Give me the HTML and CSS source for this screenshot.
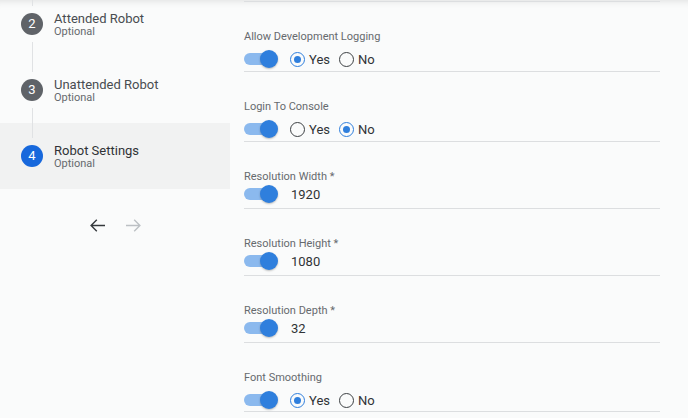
FILE: index.html
```html
<!DOCTYPE html>
<html lang="en">
<head>
    <meta charset="UTF-8">
    <meta name="viewport" content="width=device-width, initial-scale=1.0">
    <link rel="stylesheet" href="styles.css">
    <title>Robot Settings</title>
</head>
<body>
    <div class="page">
        <div class="sidebar">
            <div class="steps">
                <div class="step">
                    <div class="rail"><span class="line"></span><span class="dot">2</span><span class="line"></span></div>
                    <div class="step-text"><div class="step-title">Attended Robot</div><div class="step-sub">Optional</div></div>
                </div>
                <div class="step">
                    <div class="rail"><span class="line"></span><span class="dot">3</span><span class="line"></span></div>
                    <div class="step-text"><div class="step-title">Unattended Robot</div><div class="step-sub">Optional</div></div>
                </div>
                <div class="step active">
                    <div class="rail"><span class="line"></span><span class="dot">4</span><span class="line none"></span></div>
                    <div class="step-text"><div class="step-title">Robot Settings</div><div class="step-sub">Optional</div></div>
                </div>
            </div>
            <div class="nav">
                <svg class="arrow back" viewBox="0 0 15 13" width="15" height="13"><path d="M15 6.5H1.2 M6.8 0.8L1.1 6.5l5.7 5.7" fill="none" stroke="currentColor" stroke-width="1.4"/></svg>
                <svg class="arrow next" viewBox="0 0 15 13" width="15" height="13"><path d="M0 6.5H13.8 M8.2 0.8l5.7 5.7-5.7 5.7" fill="none" stroke="currentColor" stroke-width="1.4"/></svg>
            </div>
        </div>

        <div class="form">
            <div class="field choice">
                <div class="label">Allow Development Logging</div>
                <div class="row">
                    <span class="toggle"><span class="track"></span><span class="thumb"></span></span>
                    <label class="radio"><input type="radio" name="devlog" checked> Yes</label>
                    <label class="radio"><input type="radio" name="devlog"> No</label>
                </div>
            </div>
            <div class="field choice">
                <div class="label">Login To Console</div>
                <div class="row">
                    <span class="toggle"><span class="track"></span><span class="thumb"></span></span>
                    <label class="radio"><input type="radio" name="console"> Yes</label>
                    <label class="radio"><input type="radio" name="console" checked> No</label>
                </div>
            </div>
            <div class="field">
                <div class="label">Resolution Width *</div>
                <div class="row">
                    <span class="toggle"><span class="track"></span><span class="thumb"></span></span>
                    <span class="value">1920</span>
                </div>
            </div>
            <div class="field">
                <div class="label">Resolution Height *</div>
                <div class="row">
                    <span class="toggle"><span class="track"></span><span class="thumb"></span></span>
                    <span class="value">1080</span>
                </div>
            </div>
            <div class="field">
                <div class="label">Resolution Depth *</div>
                <div class="row">
                    <span class="toggle"><span class="track"></span><span class="thumb"></span></span>
                    <span class="value">32</span>
                </div>
            </div>
            <div class="field choice last">
                <div class="label">Font Smoothing</div>
                <div class="row">
                    <span class="toggle"><span class="track"></span><span class="thumb"></span></span>
                    <label class="radio"><input type="radio" name="smooth" checked> Yes</label>
                    <label class="radio"><input type="radio" name="smooth"> No</label>
                </div>
            </div>
        </div>
    </div>
</body>
</html>
```

FILE: styles.css
```css
body{
    margin: 0;
    background: #fafbfb;
    font-family: Roboto, "Noto Sans", sans-serif;
    color: #303336;
    overflow: hidden;
}

.page{
    display: flex;
    height: 418px;
    box-shadow: inset 0 8px 8px -8px rgba(0, 0, 0, 0.14);
}

/* stepper */
.sidebar{
    width: 230px;
    flex-shrink: 0;
}

.steps{
    margin-top: -9px;
}

.step{
    display: flex;
    height: 66px;
}

.step.active{
    background: #f1f2f2;
}

.rail{
    width: 22px;
    margin-left: 21px;
    display: flex;
    flex-direction: column;
    align-items: center;
}

.line{
    flex: 1;
    width: 1px;
    background: #e0e2e4;
}

.line.none{
    background: transparent;
}

.dot{
    width: 22px;
    height: 22px;
    margin: 7px 0;
    border-radius: 50%;
    background: #5f6368;
    color: #fff;
    font-size: 13px;
    line-height: 22px;
    text-align: center;
}

.active .dot{
    background: #1768dc;
}

.step-text{
    margin-left: 11px;
    align-self: center;
}

.step-title{
    font-size: 13px;
    line-height: 15px;
    color: #484c50;
}

.active .step-title{
    color: #303336;
}

.step-sub{
    font-size: 11px;
    line-height: 12px;
    color: #666a6e;
}

.nav{
    display: flex;
    justify-content: center;
    align-items: center;
    gap: 21px;
    height: 30px;
    margin-top: 21px;
}

.arrow.back{
    color: #34383c;
}

.arrow.next{
    color: #bcc0c4;
}

/* form */
.form{
    flex: 1;
    padding: 1px 28px 0 14px;
}

.form:before{
    content: "";
    display: block;
    border-top: 1px solid #dcdee0;
}

.field{
    padding: 28px 0 4px;
    border-bottom: 1px solid #dcdee0;
}

.field.choice{
    padding-bottom: 2px;
}

.field.last{
    padding-bottom: 1px;
}

.label{
    font-size: 11px;
    line-height: 14px;
    color: #666a6e;
}

.row{
    display: flex;
    align-items: center;
    height: 20px;
}

.choice .row{
    margin-top: 5px;
}

.toggle{
    display: flex;
    align-items: center;
    margin-right: 12px;
}

.track{
    width: 28px;
    height: 12px;
    border-radius: 6px;
    background: #8bb9ee;
}

.thumb{
    width: 18px;
    height: 18px;
    margin-left: -12px;
    border-radius: 50%;
    background: #2f7fdd;
    box-shadow: 0 1px 2px rgba(0, 0, 0, 0.25);
}

.value{
    font-size: 13px;
    padding-left: 1px;
}

.radio{
    display: flex;
    align-items: center;
    gap: 4px;
    margin-right: 9px;
    font-size: 13px;
}

.radio input{
    appearance: none;
    margin: 0;
    width: 15px;
    height: 15px;
    border: 1.5px solid #3c4043;
    border-radius: 50%;
    display: grid;
    place-items: center;
}

.radio input:checked{
    border-color: #2f7fdd;
}

.radio input:checked:after{
    content: "";
    width: 7px;
    height: 7px;
    border-radius: 50%;
    background: #2f7fdd;
}
```
